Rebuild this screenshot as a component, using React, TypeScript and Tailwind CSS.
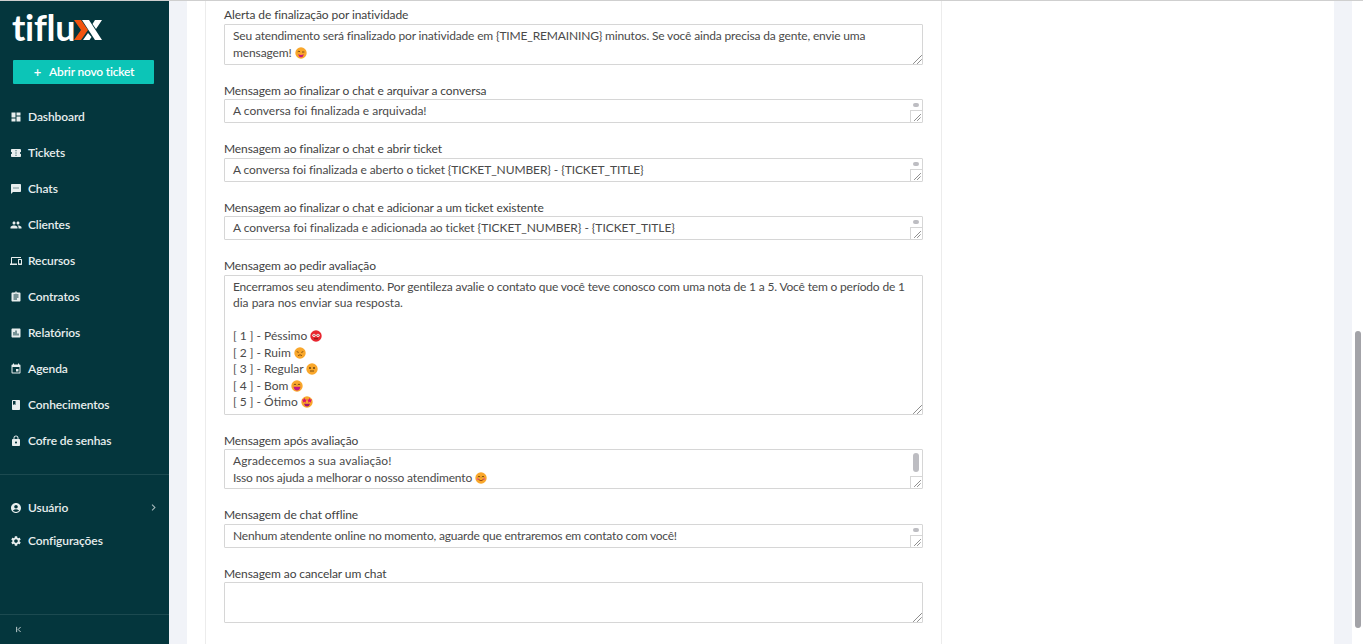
import React from "react";
import { ChevronFirst } from "lucide-react";
import { MdAccountCircle, MdAssessment, MdAssignment, MdBook, MdChevronRight, MdConfirmationNumber, MdDashboard, MdDevices, MdEvent, MdLock, MdPeople, MdSettings, MdSms } from "react-icons/md";

const FONT = "font-['Lato','Noto_Sans',sans-serif]";

function Emoji({ kind }: { kind: string }) {
  const c = kind === "red" ? "#e8262f" : "#f9a72b";
  return (
    <svg viewBox="0 0 12 12" width="12" height="12" className="inline-block align-[-2px]">
      <circle cx="6" cy="6" r="5.7" fill={c} />
      {kind === "red" && (<><circle cx="4" cy="5.3" r="1.6" fill="#fff" /><circle cx="8" cy="5.3" r="1.6" fill="#fff" /><circle cx="4" cy="5.3" r=".7" fill="#7a1515" /><circle cx="8" cy="5.3" r=".7" fill="#7a1515" /><path d="M4 8.8h4" stroke="#7a1515" strokeWidth="1" /></>)}
      {kind === "sad" && (<><path d="M2.7 4.6l2 .8M9.3 4.6l-2 .8M4 8.6q2-1.6 4 0" stroke="#7a4a10" strokeWidth=".9" fill="none" /></>)}
      {kind === "neutral" && (<><circle cx="4" cy="5" r="1" fill="#6b4310" /><circle cx="8" cy="5" r="1" fill="#6b4310" /><path d="M4 8h4" stroke="#6b4310" strokeWidth=".9" /></>)}
      {kind === "grin" && (<><path d="M2.8 4.8q1.2-1.4 2.4 0M6.8 4.8q1.2-1.4 2.4 0" stroke="#6b4310" strokeWidth=".9" fill="none" /><path d="M2.5 6.8h7q-.6 3.6-3.5 3.6T2.5 6.8z" fill="#c5177f" /></>)}
      {kind === "star" && (<><path d="M3.4 1.8l.8 1.7 1.8.2-1.3 1.2.3 1.8-1.6-.9-1.6.9.3-1.8L.8 3.7l1.8-.2zM8.6 1.8l.8 1.7 1.8.2-1.3 1.2.3 1.8-1.6-.9-1.6.9.3-1.8L6 3.7l1.8-.2z" fill="#d8156b" /><path d="M3 7.8h6q-.6 2.8-3 2.8t-3-2.8z" fill="#a3176b" /></>)}
      {kind === "wink" && (<><path d="M2.7 4.8q1.2-1.2 2.4 0M7 5h2.4" stroke="#6b4310" strokeWidth=".9" fill="none" /><path d="M3 7.2q3 1.6 6 0-1 3-3 3t-3-3z" fill="#c5177f" /></>)}
      {kind === "smile" && (<><circle cx="2.8" cy="7" r="1.1" fill="#f0607a" /><circle cx="9.2" cy="7" r="1.1" fill="#f0607a" /><path d="M2.8 5q1.2-1.4 2.4 0M6.8 5q1.2-1.4 2.4 0" stroke="#6b4310" strokeWidth=".9" fill="none" /><path d="M3.6 7.6q2.4 2.2 4.8 0" stroke="#8c3a10" strokeWidth=".9" fill="none" /></>)}
    </svg>
  );
}

function Grip({ small }: { small?: boolean }) {
  if (small) {
    return (
      <svg viewBox="0 0 7 7" width="7" height="7" className="absolute right-[1px] bottom-[1px]">
        <path d="M.5 6.5l6-6M3.5 6.5l3-3" stroke="#333" strokeWidth="1" strokeDasharray="1 .5" fill="none" />
      </svg>
    );
  }
  return (
    <svg viewBox="0 0 10 10" width="10" height="10" className="absolute right-[0px] bottom-[0px]">
      <path d="M1.5 9.5l8-8M5.5 9.5l4-4" stroke="#333" strokeWidth="1" strokeDasharray="1 .5" fill="none" />
    </svg>
  );
}

function Box({ h, mode, pt = "pt-[3px]", children }: { h: string; mode: "plain" | "thumb" | "tall"; pt?: string; children?: React.ReactNode }) {
  return (
    <div className={`relative ${h} ${pt} border border-[#d6d6d6] rounded-[1px] pl-[8px] pr-[14px] text-[12px] leading-[16.5px] text-[#4a4a4a] overflow-hidden whitespace-nowrap bg-white`}>
      {children}
      {mode === "plain" && <Grip />}
      {mode !== "plain" && (
        <div className="absolute right-0 bottom-0 w-[12px] h-[12px] border-l border-t border-[#d6d6d6] bg-white">
          <Grip small />
        </div>
      )}
      {mode === "thumb" && <div className="absolute right-[3px] top-[3px] w-[6px] h-[4px] rounded-full bg-[#bdbdc2]" />}
      {mode === "tall" && <div className="absolute right-[3px] top-[3px] w-[6px] h-[19px] rounded-full bg-[#bdbdc2]" />}
    </div>
  );
}

function Field({ label, mt, tight, children }: { label: string; mt: string; tight?: boolean; children: React.ReactNode }) {
  return (
    <div className={mt}>
      <div className={`text-[12px] leading-[16px] tracking-[-0.09px] text-[#3f3f3f] h-[16px] ${tight ? "" : "mb-[1px]"}`}>{label}</div>
      {children}
    </div>
  );
}

const nav = [
  ["Dashboard", MdDashboard],
  ["Tickets", MdConfirmationNumber],
  ["Chats", MdSms],
  ["Clientes", MdPeople],
  ["Recursos", MdDevices],
  ["Contratos", MdAssignment],
  ["Relatórios", MdAssessment],
  ["Agenda", MdEvent],
  ["Conhecimentos", MdBook],
  ["Cofre de senhas", MdLock],
] as const;

export default function App() {
  return (
    <div className={`h-[644px] w-[1363px] overflow-hidden flex flex-col bg-white ${FONT}`}>
      <div className="h-[1px] bg-[#cfcfcf] shrink-0" />
      <div className="flex flex-1 min-h-0">
        <aside className="w-[169px] shrink-0 bg-[#04363d] text-[#e8eeee] flex flex-col">
          <div className="h-[59px] pl-[12px] pt-[4px] flex items-start">
            <span className="text-[36px] leading-[44px] font-bold text-white tracking-[-0.3px]">tiflu</span>
            <svg viewBox="0 0 28 20" width="28" height="20" className="mt-[15px] -ml-[1px]">
              <path d="M0 0h7l7 10-7 10H0l7-10z" fill="#f2530f" />
              <path d="M8 0h7l13 20h-7zM21 0h7l-6 9-3.5-5z" fill="#fff" />
              <path d="M14 13l3.5 4-2 3H9z" fill="#fff" />
            </svg>
          </div>
          <button className="ml-[13px] w-[141px] h-[24px] rounded-[1px] bg-[#0cc5b7] text-white text-[12px] font-semibold tracking-[-0.2px] flex items-center justify-center gap-[8px] pl-[1px]">
            <span className="text-[13px] leading-none">+</span>
            Abrir novo ticket
          </button>
          <nav className="mt-[15px] flex flex-col">
            {nav.map(([t, I]) => (
              <div key={t} className="h-[36px] pl-[10px] flex items-center gap-[6px] text-[12px] font-semibold tracking-[-0.1px]">
                <I size={12} />
                <span>{t}</span>
              </div>
            ))}
          </nav>
          <div className="mt-[15px] border-t border-[#1c4a50] pt-[16px]">
            <div className="h-[33px] pl-[10px] pr-[9px] flex items-center gap-[6px] text-[12px] font-semibold tracking-[-0.1px]">
              <MdAccountCircle size={12} />
              <span className="flex-1">Usuário</span>
              <MdChevronRight size={13} className="text-[#a5b8ba]" />
            </div>
            <div className="h-[33px] pl-[10px] flex items-center gap-[6px] text-[12px] font-semibold tracking-[-0.1px]">
              <MdSettings size={12} />
              <span>Configurações</span>
            </div>
          </div>
          <div className="mt-auto h-[30px] border-t border-[#1c4a50] pl-[14px] flex items-center">
            <ChevronFirst size={9} strokeWidth={2.5} className="text-[#c9d5d6]" />
          </div>
        </aside>
        <div className="w-[18px] shrink-0 bg-[#f1f3f8]" />
        <main className="w-[1147px] shrink-0 bg-white pl-[18px]">
          <div className="w-[737px] h-full border-x border-[#ececec] pl-[18px] pr-[18px] pt-[6px]">
            <Field label="Alerta de finalização por inatividade" mt="">
              <Box h="h-[41px]" mode="plain">
                <span className="tracking-[-0.16px]">Seu atendimento será finalizado por inatividade em {"{TIME_REMAINING}"} minutos. Se você ainda precisa da gente, envie uma</span>
                <br />
                <span className="tracking-[-0.1px]">mensagem!</span> <Emoji kind="wink" />
              </Box>
            </Field>
            <Field label="Mensagem ao finalizar o chat e arquivar a conversa" mt="mt-[18px]" tight>
              <Box h="h-[24px]" mode="thumb">A conversa foi finalizada e arquivada!</Box>
            </Field>
            <Field label="Mensagem ao finalizar o chat e abrir ticket" mt="mt-[18px]">
              <Box h="h-[24px]" mode="thumb"><span className="tracking-[-0.1px]">A conversa foi finalizada e aberto o ticket {"{TICKET_NUMBER}"} - {"{TICKET_TITLE}"}</span></Box>
            </Field>
            <Field label="Mensagem ao finalizar o chat e adicionar a um ticket existente" mt="mt-[18px]" tight>
              <Box h="h-[24px]" mode="thumb"><span className="tracking-[-0.05px]">A conversa foi finalizada e adicionada ao ticket {"{TICKET_NUMBER}"} - {"{TICKET_TITLE}"}</span></Box>
            </Field>
            <Field label="Mensagem ao pedir avaliação" mt="mt-[18px]">
              <Box h="h-[140px]" mode="plain" pt="pt-[2.5px]">
                <span className="tracking-[-0.17px]">Encerramos seu atendimento. Por gentileza avalie o contato que você teve conosco com uma nota de 1 a 5. Você tem o período de 1</span>
                <br />
                dia para nos enviar sua resposta.
                <br /><br />
                [ 1 ] - Péssimo <Emoji kind="red" /><br />
                [ 2 ] - Ruim <Emoji kind="sad" /><br />
                [ 3 ] - Regular <Emoji kind="neutral" /><br />
                [ 4 ] - Bom <Emoji kind="grin" /><br />
                [ 5 ] - Ótimo <Emoji kind="star" />
              </Box>
            </Field>
            <Field label="Mensagem após avaliação" mt="mt-[18px]" tight>
              <Box h="h-[40px]" mode="tall">
                <span className="tracking-[0.1px]">Agradecemos a sua avaliação!</span><br />
                <span className="tracking-[-0.15px]">Isso nos ajuda a melhorar o nosso atendimento</span> <Emoji kind="smile" />
              </Box>
            </Field>
            <Field label="Mensagem de chat offline" mt="mt-[18px]">
              <Box h="h-[24px]" mode="thumb"><span className="tracking-[-0.2px]">Nenhum atendente online no momento, aguarde que entraremos em contato com você!</span></Box>
            </Field>
            <Field label="Mensagem ao cancelar um chat" mt="mt-[18px]" tight>
              <Box h="h-[41px]" mode="plain" />
            </Field>
          </div>
        </main>
        <div className="w-[18px] shrink-0 bg-[#f1f3f8]" />
        <div className="flex-1 bg-white pl-[3px] pt-[330px]">
          <div className="w-[6px] h-[297px] rounded-full bg-[#a3a3a8]" />
        </div>
      </div>
    </div>
  );
}
